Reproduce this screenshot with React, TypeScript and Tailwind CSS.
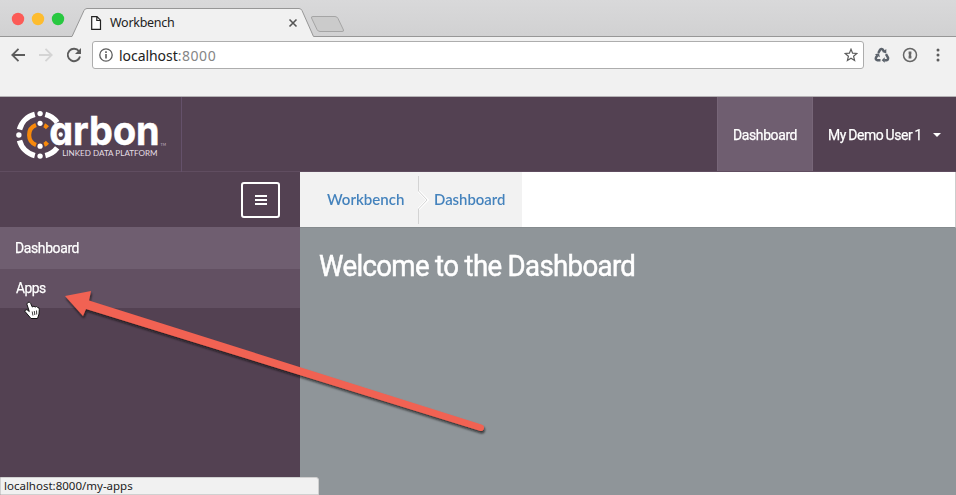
import React from "react";

const Chrome = () => (
  <header className="h-[97px] bg-[#f1f1f1] border-b border-[#b5b2b5] font-['Noto_Sans','Open_Sans',sans-serif]">
    <div className="relative h-9">
      <svg className="absolute inset-0" width="956" height="37" viewBox="0 0 956 37">
        <defs>
          <linearGradient id="strip" x1="0" y1="0" x2="0" y2="1">
            <stop offset="0" stopColor="#d9d9da" />
            <stop offset="1" stopColor="#d1d1d2" />
          </linearGradient>
        </defs>
        <rect width="956" height="36" fill="url(#strip)" />
        <path d="M72 37 L84 10.5 Q85 8.5 87 8.5 H299 Q301 8.5 302 10.5 L313.500 37Z" fill="#f1f1f1" />
        <path d="M0 36.500 H72 L84 10.500 Q85 8.500 87 8.500 H299 Q301 8.500 302 10.500 L313.500 36.500 H956" fill="none" stroke="#979797" />
        <path d="M313 16.500 H335 Q337 16.500 338 18.500 L343.500 30 Q344 31.500 342 31.500 H320 Q318 31.500 317 29.500 L311.500 18 Q311 16.500 313 16.500Z" fill="#cbcbcb" stroke="#a5a5a5" />
        <circle cx="18" cy="19" r="6.200" fill="#fc5b57" />
        <circle cx="38" cy="19" r="6.200" fill="#fdbc2e" />
        <circle cx="58" cy="19" r="6.200" fill="#28c840" />
        <path d="M91.700 16.700 H97 L100.500 20.200 V29.300 H91.700Z M96.800 16.700 V20.500 H100.500" fill="#fff" stroke="#222" strokeWidth="1.200" />
        <path d="M289.500 19.500 L296.500 26.500 M296.500 19.500 L289.500 26.500" stroke="#555" strokeWidth="1.600" />
      </svg>
      <span className="absolute left-[110px] top-[13px] text-[12.5px] leading-5 text-[#222] tracking-[-0.28px]">Workbench</span>
    </div>
    <div className="flex h-[38px] items-center pl-2.5 pr-2.5">
      <svg width="16" height="16" viewBox="0 0 16 16" fill="none" stroke="#5c5c5c" strokeWidth="1.800"><path d="M15 8H2.500M8.500 1.800L2.300 8l6.200 6.200" /></svg>
      <svg className="ml-3" width="16" height="16" viewBox="0 0 16 16" fill="none" stroke="#d4d4d4" strokeWidth="1.800"><path d="M1 8h12.500M7.500 1.800L13.700 8l-6.200 6.200" /></svg>
      <svg className="ml-3" width="16" height="16" viewBox="0 0 16 16" fill="none" stroke="#5c5c5c" strokeWidth="1.900"><path d="M13 4.300A6.200 6.200 0 1 0 14 9.500" /><path d="M15 1v6H9Z" fill="#5c5c5c" stroke="none" /></svg>
      <div className="ml-2.5 flex h-7 w-[772px] items-center rounded-[3px] border border-[#adadad] bg-white pl-1.5 pr-[5px]">
        <svg width="14" height="14" viewBox="0 0 14 14"><circle cx="7" cy="7" r="6.200" fill="none" stroke="#5c5c5c" strokeWidth="1.300" /><path d="M6.200 6h1.600v4.500H6.200zM6.200 3.300h1.600v1.600H6.200z" fill="#5c5c5c" /></svg>
        <span className="ml-1.5 text-[14px] tracking-[-0.05px] text-[#222]">localhost<span className="tracking-[0.55px] text-[#858585]">:8000</span></span>
        <svg className="ml-auto" width="14" height="14" viewBox="0 0 14 14" fill="none" stroke="#5c5c5c" strokeWidth="1.200"><path d="M7 1.200l1.600 4 4.200.3-3.200 2.800 1 4.200L7 10.200l-3.600 2.300 1-4.200L1.200 5.500l4.200-.3z" /></svg>
      </div>
      <svg className="ml-2.5" width="16" height="16" viewBox="0 0 16 16" fill="none" stroke="#5b626b" strokeWidth="2.500">
        <path d="M4.300 6L6 2.800Q7.200 1.200 8.700 2.500L10 4.400" /><path d="M12 7.200l2 3.400Q14.500 13 12.500 13.300H10.300" /><path d="M6.500 13.300H3.500Q1 12.600 2.100 10.300L3.300 8.500" />
        <path d="M12.300 2v4.500L8.200 5zM10.700 10.300v5.500L7.700 13.300zM.8 7.200l4.200-1 .9 4z" fill="#5b626b" stroke="none" />
      </svg>
      <svg className="ml-3" width="16" height="16" viewBox="0 0 16 16"><circle cx="8" cy="8" r="6.500" fill="none" stroke="#666" strokeWidth="1.500" /><path d="M6.600 4.500h2.800v2.700l-.6.800.6.700v2.800H6.600V8.800l.6-.8-.6-.8z" fill="#666" /></svg>
      <svg className="ml-[18px]" width="4" height="16" viewBox="0 0 4 16" fill="#5c5c5c"><circle cx="2" cy="3" r="1.500" /><circle cx="2" cy="8" r="1.500" /><circle cx="2" cy="13" r="1.500" /></svg>
    </div>
  </header>
);

const Logo = () => (
  <svg width="182" height="75" viewBox="0 97 182 75" className="border-r border-[#64516a]">
    <g fill="none" stroke="#fff" strokeWidth="5.500">
      <path d="M19.600 129.500A21.300 21.300 0 0 1 35 114.300" /><path d="M45.600 114.300A21.300 21.300 0 0 1 57.500 122.500" />
      <path d="M19.600 140.500A21.300 21.300 0 0 0 35 155.700" /><path d="M45.600 155.700A21.300 21.300 0 0 0 57.500 148" />
    </g>
    <path d="M36.200 125A10.700 10.700 0 0 0 36.200 145 M44.400 125.200Q46 125.900 47.700 127.700 M44.400 144.800Q46 144.200 47.700 142.300" fill="none" stroke="#f7890b" strokeWidth="4.200" />
    <g fill="#fff"><circle cx="40.300" cy="113.500" r="2.700" /><circle cx="40.300" cy="123.300" r="2.600" /><circle cx="19" cy="135" r="2.700" /><circle cx="40.300" cy="146.200" r="2.600" /><circle cx="40.300" cy="156.200" r="2.700" /><circle cx="61" cy="134.500" r="2.200" /></g>
    <text x="49.500" y="145" textLength="111" lengthAdjust="spacingAndGlyphs" fill="#fff" stroke="#fff" strokeWidth="0.500" className="font-['Inter',sans-serif] text-[40px] font-bold [font-feature-settings:'cv11']">arbon</text>
    <text x="62.500" y="156.500" textLength="96" lengthAdjust="spacingAndGlyphs" fill="#e4dee4" className="font-['Lato',sans-serif] text-[8.500px]">LINKED DATA PLATFORM</text>
    <text x="161.500" y="146" fill="#c9bec9" className="font-['Lato',sans-serif] text-[3.500px]">TM</text>
  </svg>
);

const Arrow = () => (
  <svg className="absolute left-0 top-0 pointer-events-none" width="956" height="495" viewBox="0 0 956 495">
    <defs><filter id="shade" x="-10%" y="-10%" width="120%" height="120%"><feDropShadow dx="0.800" dy="2.300" stdDeviation="1.200" floodColor="#111" floodOpacity=".75" /></filter></defs>
    <path d="M65 296L91 291L89 300.500L481.500 424.500A3.300 3.300 0 0 1 480.500 431L86 309L83 316Z" fill="#f16252" filter="url(#shade)" />
    <path d="M28 302.300Q29.800 301.500 30.700 303.500L32.300 307Q34 305.500 35.200 307Q36.900 305.800 37.600 307.500Q39.500 307.300 39.300 309.500L39 314L37.500 318.500H31L25 311.500Q24.700 309.200 27 309.700L29.300 311.500L27 304.500Q27 303 28 302.300Z" fill="#fff" stroke="#111" strokeWidth="1" />
    <path d="M32.200 311.500l.7 4M34.300 311l.5 4M36.500 310.500l.2 4" stroke="#111" strokeWidth=".8" />
  </svg>
);

export default function App() {
  return (
    <div className="relative flex h-[495px] w-[956px] flex-col overflow-hidden bg-[#534152] font-['Roboto',sans-serif]">
      <Chrome />
      <nav className="flex h-[75px] shrink-0 border-b border-[#604d60] text-[15px] text-white [-webkit-text-stroke:0.25px_white]">
        <div className="[-webkit-text-stroke:0]"><Logo /></div>
        <div className="ml-auto flex w-24 items-center border-x border-[#776678] bg-[#6f5e70] pl-[14.5px] pt-0.5"><span className="inline-block origin-left scale-x-[0.93] tracking-[-0.4px]">Dashboard</span></div>
        <div className="flex w-[143px] items-center pl-[15px] pt-0.5">
          <span className="inline-block w-[94px] origin-left scale-x-[0.93] whitespace-nowrap tracking-[-0.45px] [word-spacing:-0.8px]">My Demo User 1</span>
          <i className="ml-[11px] border-x-4 border-t-4 border-x-transparent border-t-white" />
        </div>
      </nav>
      <div className="flex flex-1">
        <aside className="w-[300px] shrink-0 text-[15px] text-white [-webkit-text-stroke:0.25px_white]">
          <div className="flex h-[55px] items-center justify-end pr-5">
            <button className="flex h-9 w-[39px] flex-col items-center justify-center gap-[2px] rounded-[3px] border-2 border-white">
              <i className="h-[2px] w-3 bg-white" /><i className="h-[2px] w-3 bg-white" /><i className="h-[2px] w-3 bg-white" />
            </button>
          </div>
          <div className="flex h-[42px] items-center bg-[#6f5e70] pl-[15px]"><span className="inline-block origin-left scale-x-[0.93] tracking-[-0.4px]">Dashboard</span></div>
          <div className="flex h-[39px] items-center bg-[#625062] pl-[15.5px]"><span className="inline-block origin-left scale-x-[0.92] tracking-[-0.5px]">Apps</span></div>
        </aside>
        <main className="flex flex-1 flex-col">
          <div className="flex h-[56px] border-b border-r border-b-[#858b8e] border-r-[#ccc] bg-white font-['Lato',sans-serif] text-[16px] font-semibold text-[#4583bd]">
            <div className="relative flex w-[222px] items-center bg-[#f2f2f2] pb-px pl-[27px]">
              <span className="inline-block w-[107px] origin-left scale-x-[0.94]">Workbench</span><span className="inline-block origin-left scale-x-[0.93]">Dashboard</span>
              <svg className="absolute left-[117px] top-0" width="14" height="55" viewBox="0 0 14 55" fill="none"><path d="M1.500 19L10.500 28L1.500 37" stroke="#fff" strokeWidth="2.500" /><path d="M1.500 4V19L10 28L1.500 37V52" stroke="#d3d3d3" /></svg>
            </div>
          </div>
          <div className="flex-1 bg-[#8f9599] pl-[19px] pt-[18px]"><h1 className="inline-block origin-left scale-x-[0.953] text-[29px] leading-10 tracking-[-0.7px] text-white [-webkit-text-stroke:0.5px_white]">Welcome to the Dashboard</h1></div>
        </main>
      </div>
      <div className="absolute bottom-0 left-0 h-[18px] w-[319px] rounded-tr-[3px] border border-[#d0d0d0] bg-[#f1f1f1] pl-[3px] font-['Noto_Sans',sans-serif] text-[11.500px] leading-[16px] text-[#222]">localhost:8000/my-apps</div>
      <Arrow />
    </div>
  );
}
